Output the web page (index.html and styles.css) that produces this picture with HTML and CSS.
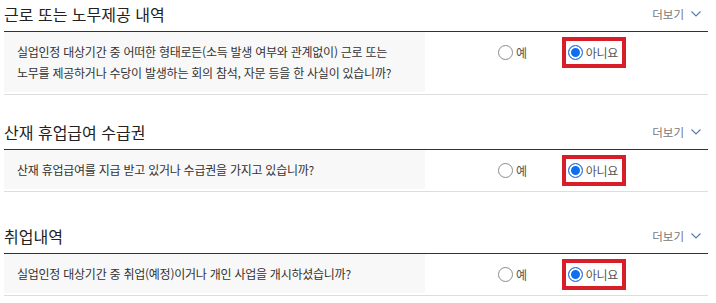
FILE: index.html
```html
<!DOCTYPE html>
<html lang="ko">
<head>
<meta charset="utf-8">
<title>실업인정 신청</title>
<link rel="stylesheet" href="styles.css">
</head>
<body>
<div class="page">
  <section class="sec">
    <div class="sec-head">
      <h2 class="sec-title">근로 또는 노무제공 내역</h2>
      <a class="more">더보기 <svg class="chev" viewBox="0 0 10 6" width="10" height="6"><path d="M0.5 0.5 L5 5 L9.5 0.5" fill="none" stroke="currentColor" stroke-width="1.2"/></svg></a>
    </div>
    <div class="row">
      <div class="q">실업인정 대상기간 중 어떠한 형태로든(소득 발생 여부와 관계없이) 근로 또는<br>노무를 제공하거나 수당이 발생하는 회의 참석, 자문 등을 한 사실이 있습니까?</div>
      <div class="opts">
        <label class="opt"><input type="radio" name="q1" class="radio"><span>예</span></label>
        <label class="opt marked"><input type="radio" name="q1" class="radio" checked><span>아니요</span></label>
      </div>
    </div>
  </section>

  <section class="sec sec-2">
    <div class="sec-head">
      <h2 class="sec-title">산재 휴업급여 수급권</h2>
      <a class="more">더보기 <svg class="chev" viewBox="0 0 10 6" width="10" height="6"><path d="M0.5 0.5 L5 5 L9.5 0.5" fill="none" stroke="currentColor" stroke-width="1.2"/></svg></a>
    </div>
    <div class="row">
      <div class="q">산재 휴업급여를 지급 받고 있거나 수급권을 가지고 있습니까?</div>
      <div class="opts">
        <label class="opt"><input type="radio" name="q2" class="radio"><span>예</span></label>
        <label class="opt marked"><input type="radio" name="q2" class="radio" checked><span>아니요</span></label>
      </div>
    </div>
  </section>

  <section class="sec sec-3">
    <div class="sec-head">
      <h2 class="sec-title">취업내역</h2>
      <a class="more">더보기 <svg class="chev" viewBox="0 0 10 6" width="10" height="6"><path d="M0.5 0.5 L5 5 L9.5 0.5" fill="none" stroke="currentColor" stroke-width="1.2"/></svg></a>
    </div>
    <div class="row">
      <div class="q">실업인정 대상기간 중 취업(예정)이거나 개인 사업을 개시하셨습니까?</div>
      <div class="opts">
        <label class="opt"><input type="radio" name="q3" class="radio"><span>예</span></label>
        <label class="opt marked"><input type="radio" name="q3" class="radio" checked><span>아니요</span></label>
      </div>
    </div>
  </section>
</div>
</body>
</html>
```

FILE: styles.css
```css
html, body {
  margin: 0;
  padding: 0;
  background: #fff;
}
body {
  font-family: "Noto Sans CJK KR", "Noto Sans", sans-serif;
  color: #333;
}
.page {
  width: 704px;
  margin-left: 4px;
}
.sec-2 { margin-top: 23px; }
.sec-3 { margin-top: 30px; }
.sec-head {
  height: 31px;
  display: flex;
  align-items: center;
  justify-content: space-between;
  border-bottom: 1px solid #333;
}
.sec-title {
  margin: 0 0 3px 0;
  font-size: 16px;
  font-weight: 400;
  color: #222;
  letter-spacing: 0;
  line-height: 24px;
}
.more {
  display: flex;
  align-items: center;
  gap: 7px;
  font-size: 11.5px;
  color: #777;
  padding-right: 7px;
  margin-bottom: 3px;
}
.chev {
  color: #5a7db0;
  display: block;
}
.row {
  display: grid;
  grid-template-columns: 421px 1fr;
  border-bottom: 1px solid #ddd;
}
.q {
  background: #f8f8f8;
  padding: 9px 0 9px 13px;
  font-size: 12px;
  line-height: 21px;
  letter-spacing: -0.25px;
  color: #333;
  margin-bottom: 2px;
}
.opts {
  display: flex;
  align-items: flex-start;
  gap: 35px;
  padding: 5px 0 0 73px;
}
.opt {
  display: flex;
  align-items: center;
  gap: 3px;
  font-size: 12px;
  line-height: 21px;
  letter-spacing: -0.3px;
  color: #555;
  margin-top: 5px;
}
.opt.marked {
  margin-top: 0;
  border: 4px solid #d81e28;
  padding: 1px 4px 1px 2px;
}
.radio {
  -webkit-appearance: none;
  appearance: none;
  margin: 0;
  width: 15px;
  height: 15px;
  border-radius: 50%;
  border: 1px solid #8a8a8a;
  background: #fff;
  box-sizing: border-box;
}
.radio:checked {
  border: 1px solid #2f74d6;
  background: #0d6ef0;
  box-shadow: inset 0 0 0 2px #fff;
}
```
